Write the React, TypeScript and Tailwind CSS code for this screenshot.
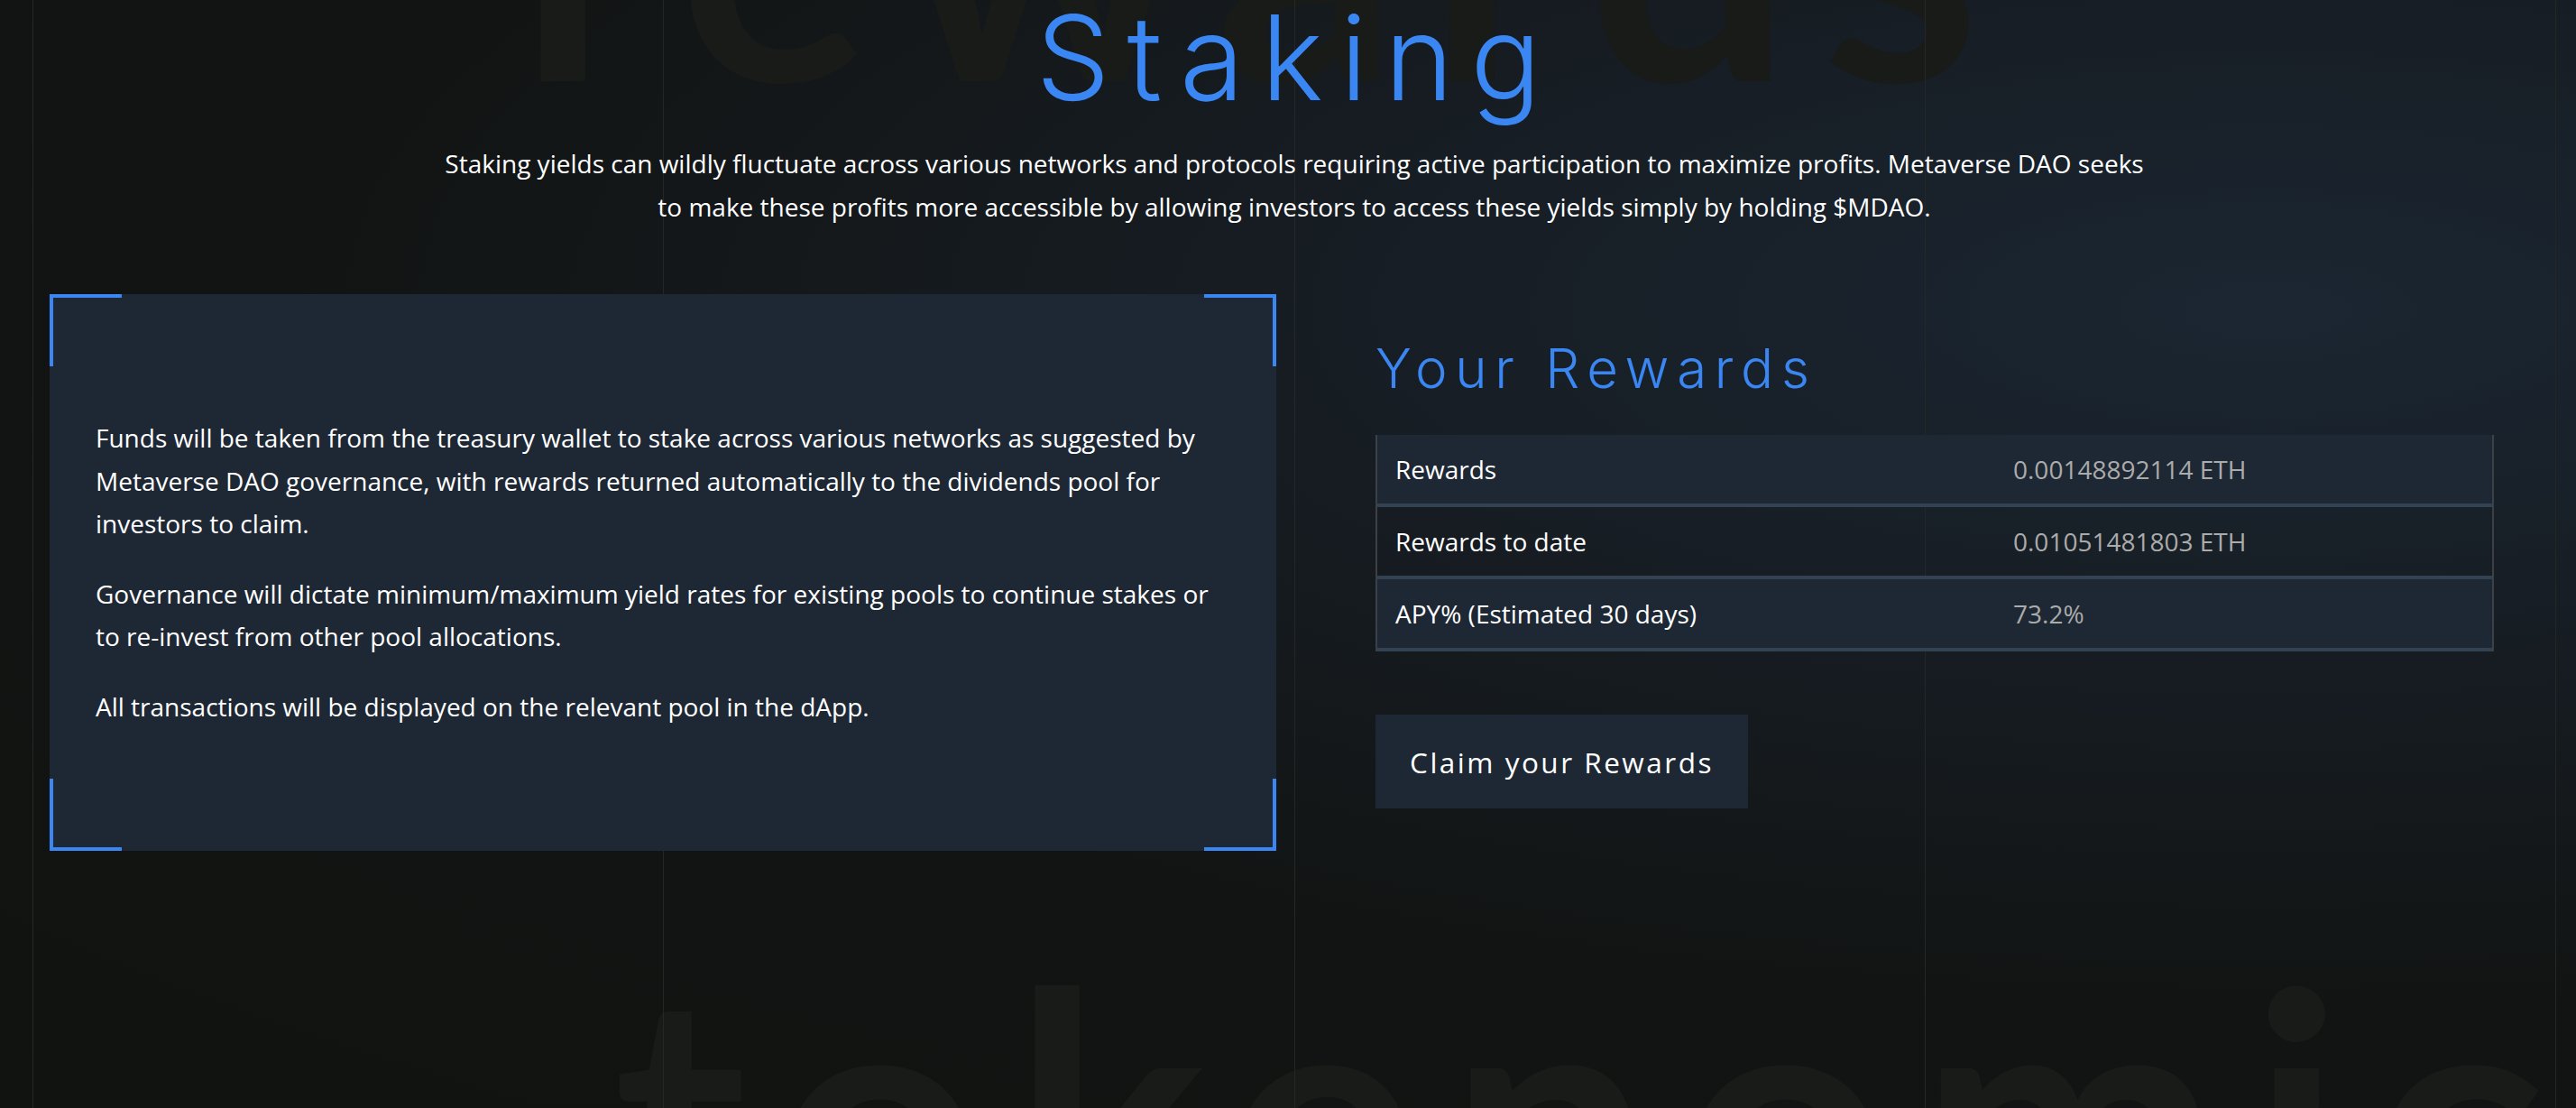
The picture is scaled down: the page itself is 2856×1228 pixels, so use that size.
import React from 'react'

const rows = [
  { label: 'Rewards', value: '0.00148892114 ETH' },
  { label: 'Rewards to date', value: '0.01051481803 ETH' },
  { label: 'APY% (Estimated 30 days)', value: '73.2%' },
]

// blue corner brackets around the info card
function Corners() {
  return (
    <>
      <span className="absolute left-0 top-0 h-[4px] w-[80px] bg-[#3a86f2]" />
      <span className="absolute left-0 top-0 h-[80px] w-[4px] bg-[#3a86f2]" />
      <span className="absolute right-0 top-0 h-[4px] w-[80px] bg-[#3a86f2]" />
      <span className="absolute right-0 top-0 h-[80px] w-[4px] bg-[#3a86f2]" />
      <span className="absolute bottom-0 left-0 h-[4px] w-[80px] bg-[#3a86f2]" />
      <span className="absolute bottom-0 left-0 h-[80px] w-[4px] bg-[#3a86f2]" />
      <span className="absolute bottom-0 right-0 h-[4px] w-[80px] bg-[#3a86f2]" />
      <span className="absolute bottom-0 right-0 h-[80px] w-[4px] bg-[#3a86f2]" />
    </>
  )
}

export default function App() {
  return (
    <div className="relative h-screen w-full overflow-hidden bg-[#111311] font-['Open_Sans',sans-serif] text-white">
      {/* background glow */}
      <div className="absolute inset-0 bg-[radial-gradient(ellipse_at_88%_28%,#1b2632_0%,#161c22_32%,#121413_62%,#111311_100%)]" />

      {/* giant faded words */}
      <div className="absolute left-[575px] top-[-265px] whitespace-nowrap font-['Lato',sans-serif] text-[400px] font-bold leading-none tracking-[33px] text-[#191b19]">
        rewards
      </div>
      <div className="absolute left-[680px] top-[1034px] whitespace-nowrap font-['Lato',sans-serif] text-[400px] font-bold leading-none tracking-[33px] text-[#191b19]">
        tokenomics
      </div>

      {/* column guide lines */}
      <div className="absolute inset-y-0 left-[36px] grid w-[2798px] grid-cols-4 border-r border-[#252726]">
        <div className="border-l border-[#252726]" />
        <div className="border-l border-[#252726]" />
        <div className="border-l border-[#252726]" />
        <div className="border-l border-[#252726]" />
      </div>

      <main className="relative ml-[36px] w-[2798px]">
        <h1 className="-mt-[1px] pl-[6px] text-center font-['Inter',sans-serif] text-[130px] font-[350] leading-none tracking-[0.145em] text-[#3a86f2]">
          Staking
        </h1>
        <p className="mx-auto mt-[29px] max-w-[1900px] text-center text-[28px] leading-[1.7]">
          Staking yields can wildly fluctuate across various networks and protocols requiring active participation to
          maximize profits. Metaverse DAO seeks to make these profits more accessible by allowing investors to access
          these yields simply by holding $MDAO.
        </p>

        <div className="mt-[73px] flex items-start">
          {/* info card */}
          <div className="relative ml-[19px] flex h-[617px] w-[1360px] flex-col justify-center bg-[#1e2834] px-[51px] text-[28px] leading-[1.7]">
            <Corners />
            <p className="mb-[30px]">
              Funds will be taken from the treasury wallet to stake across various networks as suggested by Metaverse
              DAO governance, with rewards returned automatically to the dividends pool for investors to claim.
            </p>
            <p className="mb-[30px]">
              Governance will dictate minimum/maximum yield rates for existing pools to continue stakes or to re-invest
              from other pool allocations.
            </p>
            <p>All transactions will be displayed on the relevant pool in the dApp.</p>
          </div>

          {/* rewards */}
          <div className="ml-[110px] w-[1240px]">
            <h2 className="mt-[52px] font-['Inter',sans-serif] text-[60px] font-[350] leading-none tracking-[0.145em] text-[#3a86f2]">
              Your Rewards
            </h2>
            <div className="mt-[44px] border-x-2 border-[#3d4146] text-[28px]">
              {rows.map((row, i) => (
                <div
                  key={row.label}
                  className={`flex h-[80px] items-center border-b-4 border-[#334252] ${i % 2 === 0 ? 'bg-[#1e2834]' : ''}`}
                >
                  <div className="w-[685px] px-[20px] text-white">{row.label}</div>
                  <div className="px-[20px] text-[#ababab]">{row.value}</div>
                </div>
              ))}
            </div>
            <button className="mt-[70px] flex h-[104px] w-[413px] items-center justify-center bg-[#1e2834] text-[31.5px] tracking-[2.5px] text-white">
              Claim your Rewards
            </button>
          </div>
        </div>
      </main>
    </div>
  )
}
